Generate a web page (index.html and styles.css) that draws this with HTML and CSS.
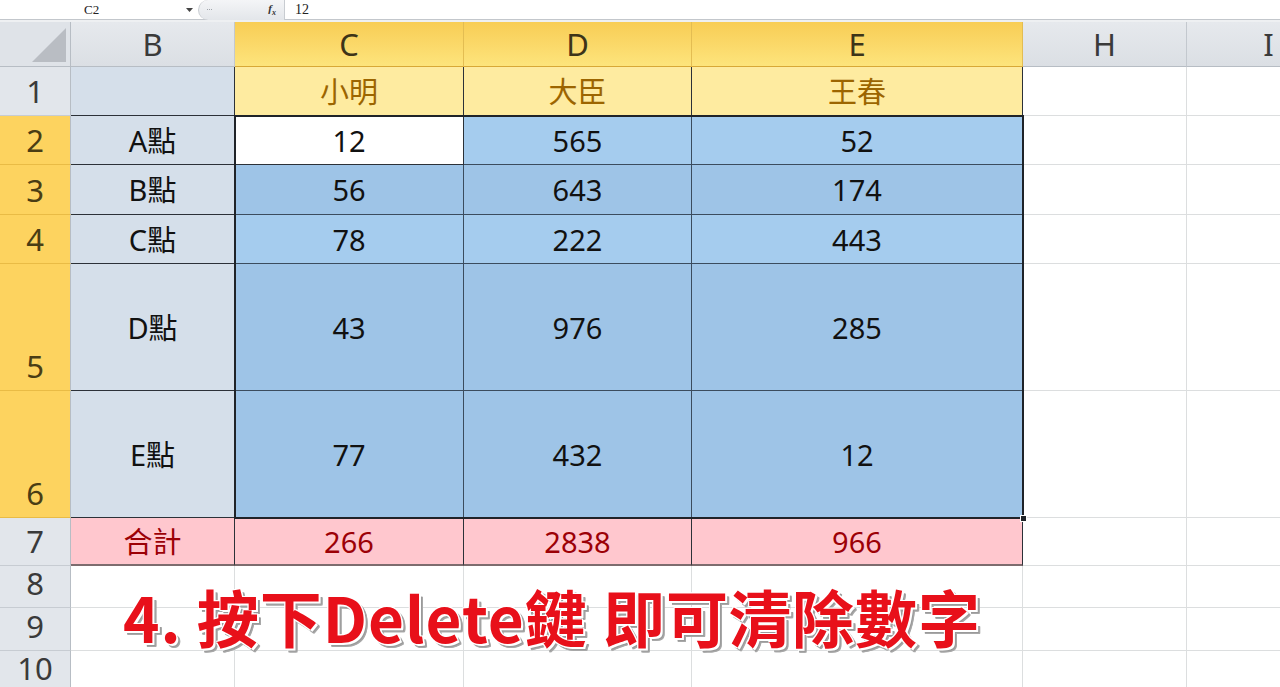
FILE: index.html
```html
<!DOCTYPE html>
<html lang="zh-Hant">
<head>
<meta charset="utf-8">
<title>Excel</title>
<link rel="stylesheet" href="styles.css">
</head>
<body>
<div class="app">
  <div class="formula-bar">
    <div class="name-box">C2</div>
    <svg class="nb-arrow" width="7" height="4" viewBox="0 0 7 4"><path d="M0 0H7L3.5 4Z" fill="#444"/></svg>
    <div class="fx-group">
      <span class="fx-knob"><span class="knob-dots"></span></span>
      <span class="fx">f<sub>x</sub></span>
    </div>
    <div class="formula">12</div>
  </div>
  <div class="bar-gap"></div>
  <div class="sheet-wrap">
  <div class="sheet">
    <!-- header row -->
    <div class="corner"><span class="tri"></span></div>
    <div class="ch">B</div>
    <div class="ch sel">C</div>
    <div class="ch sel">D</div>
    <div class="ch sel">E</div>
    <div class="ch">H</div>
    <div class="ch">I</div>

    <!-- row 1 -->
    <div class="rh">1</div>
    <div class="c lab"></div>
    <div class="c neu">小明</div>
    <div class="c neu">大臣</div>
    <div class="c neu">王春</div>
    <div class="c e"></div>
    <div class="c e"></div>

    <!-- row 2 -->
    <div class="rh sel">2</div>
    <div class="c lab">A點</div>
    <div class="c active">12</div>
    <div class="c blu b1">565</div>
    <div class="c blu b1">52</div>
    <div class="c e"></div>
    <div class="c e"></div>

    <!-- row 3 -->
    <div class="rh sel">3</div>
    <div class="c lab">B點</div>
    <div class="c blu b2">56</div>
    <div class="c blu b2">643</div>
    <div class="c blu b2">174</div>
    <div class="c e"></div>
    <div class="c e"></div>

    <!-- row 4 -->
    <div class="rh sel">4</div>
    <div class="c lab">C點</div>
    <div class="c blu b1">78</div>
    <div class="c blu b1">222</div>
    <div class="c blu b1">443</div>
    <div class="c e"></div>
    <div class="c e"></div>

    <!-- row 5 -->
    <div class="rh sel">5</div>
    <div class="c lab">D點</div>
    <div class="c blu b2">43</div>
    <div class="c blu b2">976</div>
    <div class="c blu b2">285</div>
    <div class="c e"></div>
    <div class="c e"></div>

    <!-- row 6 -->
    <div class="rh sel">6</div>
    <div class="c lab">E點</div>
    <div class="c blu b2">77</div>
    <div class="c blu b2">432</div>
    <div class="c blu b2">12</div>
    <div class="c e"></div>
    <div class="c e"></div>

    <!-- row 7 -->
    <div class="rh">7</div>
    <div class="c bad">合計</div>
    <div class="c bad">266</div>
    <div class="c bad">2838</div>
    <div class="c bad">966</div>
    <div class="c e"></div>
    <div class="c e"></div>

    <!-- row 8 -->
    <div class="rh">8</div>
    <div class="c e"></div>
    <div class="c e"></div>
    <div class="c e"></div>
    <div class="c e"></div>
    <div class="c e"></div>
    <div class="c e"></div>

    <!-- row 9 -->
    <div class="rh">9</div>
    <div class="c e"></div>
    <div class="c e"></div>
    <div class="c e"></div>
    <div class="c e"></div>
    <div class="c e"></div>
    <div class="c e"></div>

    <!-- row 10 -->
    <div class="rh">10</div>
    <div class="c e"></div>
    <div class="c e"></div>
    <div class="c e"></div>
    <div class="c e"></div>
    <div class="c e"></div>
    <div class="c e"></div>
  </div>
  <div class="sheet overlay">
    <div class="selection"><span class="handle"></span></div>
  </div>
  </div>
  <div class="caption">4. 按下Delete鍵 即可清除數字</div>
</div>
</body>
</html>
```

FILE: styles.css
```css
* { box-sizing: border-box; }
html, body { margin: 0; padding: 0; background: #fff; }
body {
  width: 1280px;
  height: 687px;
  overflow: hidden;
  font-family: "Noto Sans", "Noto Sans CJK TC", sans-serif;
}
.app { position: relative; width: 1280px; height: 687px; overflow: hidden; }

/* formula bar */
.formula-bar {
  height: 20px;
  display: flex;
  align-items: center;
  background: #fff;
  border-bottom: 1px solid #c3c7cc;
  font-family: "Liberation Serif", "DejaVu Serif", serif;
  font-size: 13px;
  color: #222;
}
.name-box { width: 186px; padding-left: 84px; }
.nb-arrow { margin-right: 5px; }
.fx-group {
  display: flex;
  align-items: center;
  justify-content: space-between;
  width: 87px;
  height: 20px;
  border-left: 1px solid #c8ccd1;
  border-right: 1px solid #c8ccd1;
  border-radius: 10px 0 0 10px;
  background: linear-gradient(#f4f5f7, #e3e6ea);
  padding: 0 8px 0 5px;
}
.fx-knob { width: 10px; height: 10px; display: flex; align-items: center; justify-content: center; }
.knob-dots { width: 5px; height: 2px; border-top: 1px dotted #a0a4aa; }
.fx { font-style: italic; font-weight: bold; font-size: 11px; color: #333; }
.fx sub { font-size: 8px; }
.formula { padding-left: 10px; font-size: 14px; }
.bar-gap { height: 2px; background: #eef0f2; }

/* sheet grid: cells layer and selection layer stacked in one grid area */
.sheet-wrap {
  display: grid;
  width: 1280px;
  overflow: hidden;
}
.sheet {
  grid-area: 1 / 1;
  display: grid;
  grid-template-columns: 71px 164px 229px 228px 331px 164px 164px;
  grid-template-rows: 45px 49px 49px 50px 49px 127px 127px 48px 42px 43px 42px;
}
.overlay { z-index: 2; pointer-events: none; }
.corner {
  background: #dfe3e8;
  border-right: 1px solid #b7bdc4;
  border-bottom: 1px solid #b7bdc4;
  position: relative;
}
.tri {
  position: absolute;
  right: 4px; bottom: 4px;
  width: 0; height: 0;
  border-left: 34px solid transparent;
  border-bottom: 34px solid #b9bdc3;
}
.ch {
  display: flex;
  align-items: center;
  justify-content: center;
  background: linear-gradient(#e6e9ed, #dbdfe4);
  border-right: 1px solid #c3c8ce;
  border-bottom: 1px solid #b7bdc4;
  font-size: 31px;
  line-height: 1;
  color: #3a3a3a;
}
.ch.sel {
  background: linear-gradient(#f8cd55, #fde47c);
  border-right-color: #e3bd52;
  border-bottom-color: #d8a836;
  color: #3d3418;
}
.rh {
  display: flex;
  align-items: flex-end;
  justify-content: center;
  background: #e2e6eb;
  border-right: 1px solid #b7bdc4;
  border-bottom: 1px solid #c7ccd2;
  font-size: 31px;
  line-height: 1;
  color: #3a3a3a;
  padding-bottom: 8px;
}
.rh.sel {
  background: #fdd35f;
  border-bottom-color: #e9bb45;
  color: #4a3d14;
}
.c {
  display: flex;
  align-items: center;
  justify-content: center;
  font-size: 29px;
  line-height: 1;
  color: #111;
  border-right: 1px solid #2c3138;
  border-bottom: 1px solid #2c3138;
}
.c.e { border-right-color: #dcdedf; border-bottom-color: #dcdedf; }
.c.lab { background: #d5dfea; }
.c.neu { background: #feeba0; color: #9c6500; }
.c.active { background: #fff; }
.c.blu { border-right-color: #3b4c5e; border-bottom-color: #3b4c5e; }
.c.b1 { background: #a5ccee; }
.c.b2 { background: #9ec4e7; }
.c.bad { background: #ffc7ce; color: #9c0006; border-bottom: 2px solid #7d6c6e; }

/* selection spanning C2:E6 */
.selection {
  grid-column: 3 / 6;
  grid-row: 3 / 8;
  margin: -1px -1px -1px -1px;
  border: 2px solid #1f2328;
  position: relative;
}
.handle {
  position: absolute;
  right: -5px;
  bottom: -5px;
  width: 7px;
  height: 7px;
  background: #1f2328;
  border: 1px solid #fff;
}

/* caption overlay */
.caption {
  position: absolute;
  left: 123px;
  top: 585px;
  font-family: "Noto Sans CJK TC", "Noto Sans", sans-serif;
  font-weight: 700;
  font-size: 62px;
  letter-spacing: 1px;
  line-height: 1;
  color: #e8101a;
  white-space: nowrap;
  text-shadow:
    -1px -1px 0 #fff, 1px -1px 0 #fff, -1px 1px 0 #fff, 1px 1px 0 #fff,
    2px 2px 0 #fff,
    3px 3px 0 #9a9a9a, 4px 4px 0 #a8a8a8, 4px 3px 0 #a8a8a8, 3px 4px 0 #a8a8a8;
}
```
